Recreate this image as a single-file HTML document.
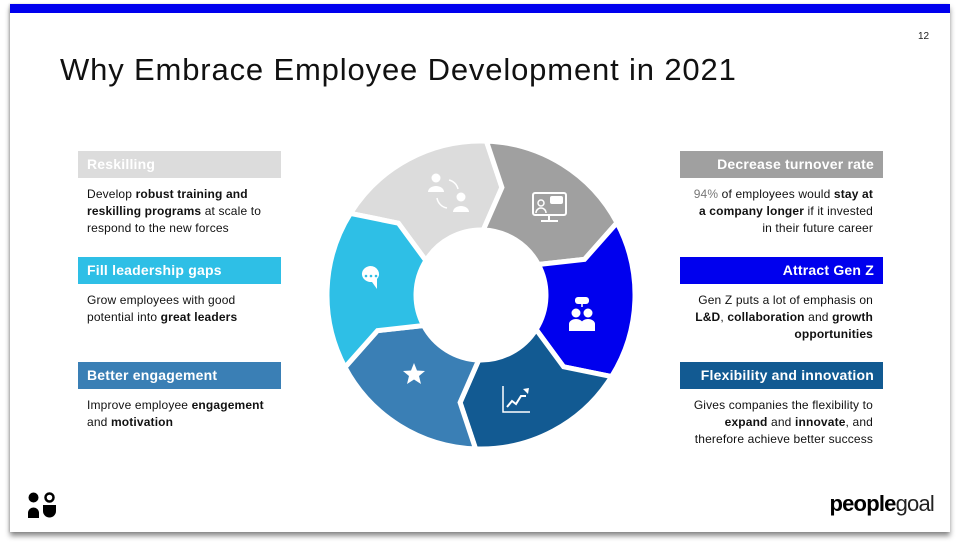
<!DOCTYPE html>
<html><head><meta charset="utf-8"><style>
body{margin:0;width:960px;height:550px;background:#fff;position:relative;overflow:hidden;font-family:"Liberation Sans",sans-serif;}
.slide{position:absolute;left:10px;top:4px;width:940px;height:528px;background:#fff;box-shadow:0 4px 5px rgba(0,0,0,.45),-1px 0 2px rgba(0,0,0,.15);}
.bar{position:absolute;left:10px;top:4px;width:940px;height:9px;background:#0000ee;}
h1{position:absolute;left:60px;top:52px;margin:0;font-weight:normal;font-size:31px;color:#111;letter-spacing:0.85px;}
.pn{position:absolute;left:918px;top:31px;font-size:10px;color:#222;}
.hd{position:absolute;height:27px;width:203px;color:#fff;font-weight:bold;font-size:14px;line-height:27px;box-sizing:border-box;letter-spacing:0.2px;}
.l{left:78px;padding-left:9px;}
.r{left:680px;padding-right:9px;text-align:right;}
.tx{position:absolute;font-size:12px;line-height:17px;color:#111;width:182px;letter-spacing:0.15px;}
.tl{left:87px;}
.tr{left:691px;text-align:right;}
b{font-weight:bold;}
</style></head><body>
<div class="slide"></div><div class="bar"></div>
<h1>Why Embrace Employee Development in 2021</h1>
<div class="pn">12</div>

<div class="hd l" style="top:151px;background:#dcdcdc">Reskilling</div>
<div class="tx tl" style="top:186px">Develop <b>robust training and reskilling programs</b> at scale to respond to the new forces</div>
<div class="hd l" style="top:257px;background:#2ebfe6">Fill leadership gaps</div>
<div class="tx tl" style="top:292px">Grow employees with good potential into <b>great leaders</b></div>
<div class="hd l" style="top:362px;background:#3a7fb5">Better engagement</div>
<div class="tx tl" style="top:397px">Improve employee <b>engagement</b> and <b>motivation</b></div>

<div class="hd r" style="top:151px;background:#a0a0a0">Decrease turnover rate</div>
<div class="tx tr" style="top:186px"><span style="color:#777">94%</span> of employees would <b>stay at a company longer</b> if it invested in their future career</div>
<div class="hd r" style="top:257px;background:#0000ee">Attract Gen Z</div>
<div class="tx tr" style="top:292px">Gen Z puts a lot of emphasis on <b>L&amp;D</b>, <b>collaboration</b> and <b>growth opportunities</b></div>
<div class="hd r" style="top:362px;background:#125a92">Flexibility and innovation</div>
<div class="tx tr" style="top:397px">Gives companies the flexibility to <b>expand</b> and <b>innovate</b>, and therefore achieve better success</div>

<svg width="960" height="550" style="position:absolute;left:0;top:0" id="w">
<g id="segs"></g>
<g fill="#fff" stroke="#fff">
 <circle cx="436" cy="178" r="4.5" stroke="none"/><path d="M428 192a8 6 0 0 1 16 0z" stroke="none"/>
 <circle cx="461" cy="197" r="4.5" stroke="none"/><path d="M453 212a8 6 0 0 1 16 0z" stroke="none"/>
 <path d="M449 180a12 12 0 0 1 9 9M447 208a12 12 0 0 1 -10 -10" fill="none" stroke-width="1.5"/>
 <rect x="533" y="193" width="33" height="22" rx="2" fill="none" stroke-width="2"/>
 <path d="M549 215v5M541 221h17" fill="none" stroke-width="2"/>
 <rect x="550" y="196" width="13" height="8" rx="2" stroke="none"/>
 <circle cx="541" cy="203" r="3" fill="none" stroke-width="1.5"/><path d="M536 213a5 5 0 0 1 10 0" fill="none" stroke-width="1.5"/>
 <path d="M372 282a9 8 0 1 1 -2 -16a9 8 0 0 1 7 13l0 10z" stroke="none"/>
 <g fill="#2ebfe6" stroke="none"><circle cx="366" cy="276" r="1.3"/><circle cx="371" cy="276" r="1.3"/><circle cx="376" cy="276" r="1.3"/></g>
 <rect x="575" y="297" width="14" height="7" rx="3" stroke="none"/>
 <path d="M582 304v3" stroke-width="1.5"/>
 <circle cx="576" cy="313" r="4.5" stroke="none"/><circle cx="588" cy="313" r="4.5" stroke="none"/>
 <path d="M569 331v-7a7 5 0 0 1 14 0v7zM581 331v-7a7 5 0 0 1 14 0v7z" stroke="none"/>
 <path d="M414 363l3 7.5 8 .5-6 5 2 8-7-4.5-7 4.5 2-8-6-5 8-.5z" stroke="none"/>
 <path d="M503 386v26h27" fill="none" stroke-width="1.5"/>
 <path d="M507 407l5-6 4 3 5-8 5 0" fill="none" stroke-width="2"/>
 <path d="M523 389l6-1-1 6z" stroke="none"/>
</g>
</svg>

<svg width="32" height="30" style="position:absolute;left:27px;top:492px" viewBox="0 0 32 30">
 <circle cx="6.5" cy="5.5" r="5"/><circle cx="22.5" cy="5.5" r="4" fill="none" stroke="#000" stroke-width="2.5"/>
 <path d="M1 26v-5a5.5 5.5 0 0 1 11 0v5z"/><path d="M16 13h13v6a6.5 6.5 0 0 1-13 0z"/>
</svg>
<div style="position:absolute;right:26px;top:491px;font-size:22px;letter-spacing:-0.8px;color:#000"><b>people</b><span style="font-weight:normal;color:#222">goal</span></div>

<script>
var cx=481,cy=295,R=154,r=65,d=9;
function P(a,rad){a=a*Math.PI/180;return (cx+rad*Math.sin(a)).toFixed(1)+" "+(cy-rad*Math.cos(a)).toFixed(1);}
var cols=[["#dcdcdc",302],["#a0a0a0",2],["#0000ee",62],["#125a92",122],["#3a7fb5",182],["#2ebfe6",242]];
var s="";
cols.forEach(function(c){var a=c[1],b=a+60,m=(R+r)/2;
s+='<path fill="'+c[0]+'" stroke="#fff" stroke-width="5" stroke-linejoin="miter" d="M'+P(a,R)+' A'+R+' '+R+' 0 0 1 '+P(b,R)+' L'+P(b+d,m)+' L'+P(b,r)+' A'+r+' '+r+' 0 0 0 '+P(a,r)+' L'+P(a+d,m)+' Z"/>';});
document.getElementById("segs").innerHTML=s;
</script>
</body></html>
